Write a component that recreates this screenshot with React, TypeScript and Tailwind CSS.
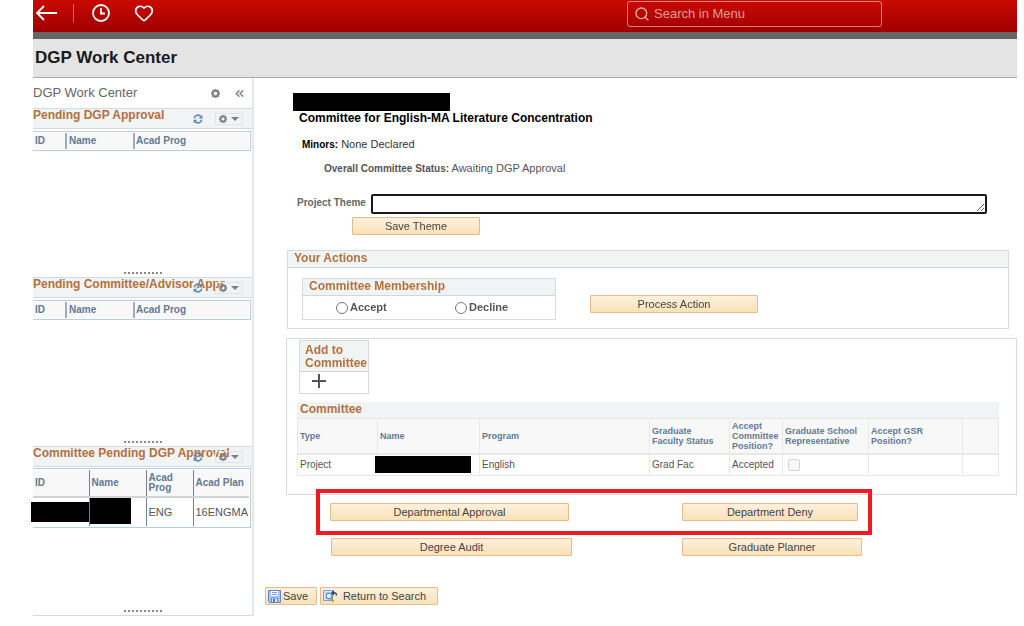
import type { ReactNode } from 'react'
import { ChevronsLeft, Heart, Search } from 'lucide-react'

// =============================================================
//  Data
// =============================================================

const committeeColumns = [
  { label: 'Type',                       width: 'w-[80px]' },
  { label: 'Name',                       width: 'w-[102px]' },
  { label: 'Program',                    width: '' },
  { label: 'Graduate Faculty Status',    width: 'w-[80px] pr-2' },
  { label: 'Accept Committee Position?', width: 'w-[53px]' },
  { label: 'Graduate School Representative', width: 'w-[86px]' },
  { label: 'Accept GSR Position?',       width: 'w-[94px] pr-6' },
  { label: '',                           width: 'w-[36px]' },
]

// =============================================================
//  Icons
// =============================================================

function GearIcon({ className }: { className: string }) {
  return (
    <svg viewBox="0 0 16 16" className={className} fill="none" stroke="#858585" aria-hidden="true">
      <circle cx="8" cy="8" r="5.2" strokeWidth="4.2" />
      <path d="M8 0v3M8 13v3M0 8h3M13 8h3M2.300 2.300l2 2M11.700 11.700l2 2M2.300 13.700l2-2M11.700 4.300l2-2" strokeWidth="3" />
    </svg>
  )
}

function ClockIcon() {
  return (
    <svg viewBox="0 0 20 20" className="size-[20px]" fill="none" stroke="currentColor" strokeWidth="1.8" aria-hidden="true">
      <circle cx="10" cy="10" r="8" />
      <path d="M10 5v5.500h4" />
    </svg>
  )
}

function RefreshIcon() {
  return (
    <svg viewBox="0 0 16 16" className="size-[10px]" fill="none" stroke="#6488ab" strokeWidth="2.6" aria-hidden="true">
      <path d="M2 7a6 6 0 0 1 10.6-3M14 9a6 6 0 0 1-10.6 3" />
      <path d="M15 1v6H9zM1 15V9h6z" fill="#6488ab" stroke="none" />
    </svg>
  )
}

function DiskIcon() {
  return (
    <svg viewBox="0 0 13 13" className="size-[13px]" aria-hidden="true">
      <path d="M.5.5h12v12h-11l-1-1z" fill="#a9c3f2" stroke="#5f86d0" />
      <path d="M3 1h7v5H3z" fill="#fff" />
      <path d="M4 2.500h5M4 4.500h5" stroke="#7d9edb" />
      <path d="M3.500 8h6v4.500h-6z" fill="#e6eefc" stroke="#5f86d0" />
      <path d="M5 9h2v3H5z" fill="#4a70c0" />
    </svg>
  )
}

function ReturnIcon() {
  return (
    <svg viewBox="0 0 15 14" className="h-[14px] w-[15px]" aria-hidden="true">
      <path d="M.5 1.500h9v10h-9z" fill="#dce8fb" stroke="#7e9fd6" />
      <path d="M2 4h3M2 9.500h3" stroke="#9cb6e2" />
      <circle cx="6" cy="7" r="2.800" fill="#eef6ff" stroke="#5c88cc" strokeWidth="1.200" />
      <path d="M8 9.500l2.500 3" stroke="#b5a324" strokeWidth="2" />
      <path d="M13.500 6.500c0-2-1-2.800-3-2.800" fill="none" stroke="#1d3f80" strokeWidth="1.300" />
      <path d="M8 3.700L11 1v5.400z" fill="#1d3f80" />
    </svg>
  )
}

// =============================================================
//  Shared pieces
// =============================================================

function Button({ className, children }: { className: string; children: ReactNode }) {
  return (
    <button
      type="button"
      className={`flex h-[18px] items-center justify-center rounded-[1px] border border-[#e5ba8c] bg-linear-to-b from-[#fdf0dc] to-[#fae2b8] text-[11px] whitespace-nowrap text-[#444] ${className}`}
    >
      {children}
    </button>
  )
}

function Pagelet({ title, children }: { title: string; children: ReactNode }) {
  return (
    <section className="flex h-[169px] flex-col">
      <div className="relative h-[21px] border-y border-[#d3dbe2] bg-[#f0f4f5]">
        <h2 className="text-[12px] leading-[13px] font-bold whitespace-nowrap text-[#b5703c]">{title}</h2>
        <div className="absolute top-1 right-[9px] flex items-center gap-3">
          <button type="button" aria-label="Refresh"><RefreshIcon /></button>
          <button
            type="button"
            aria-label="Settings"
            className="flex h-[12px] w-[28px] items-center justify-center gap-1 border border-[#dfe3e6]"
          >
            <GearIcon className="size-[8px]" />
            <span className="border-x-4 border-t-4 border-x-transparent border-t-[#808080]" />
          </button>
        </div>
      </div>
      {children}
      <div className="mt-auto flex justify-center gap-[2px] pb-[3px]">
        {Array.from({ length: 10 }, (_, i) => (
          <span key={i} className="size-[2px] bg-[#888]" />
        ))}
      </div>
    </section>
  )
}

function EmptyGrid() {
  return (
    <div className="mt-[2px] mr-px border-y border-r border-[#b9cde2] py-px pr-px">
      <table className="w-full bg-[#f8f8f8] text-left text-[10px] leading-[16px] text-[#5f7a96]">
        <thead>
          <tr>
            <th className="w-[33px] px-[2px]">ID</th>
            <th className="w-[68px] border-l-2 border-[#a3abb5] px-[2px]">Name</th>
            <th className="border-l-2 border-[#a3abb5] px-px">Acad Prog</th>
          </tr>
        </thead>
      </table>
    </div>
  )
}

function PendingGrid() {
  return (
    <div className="mt-px mr-px border-y border-r border-[#b9cde2] py-px pr-px">
      <table className="w-full table-fixed text-left text-[10px] leading-[10px]">
        <thead className="bg-[#f8f8f8] text-[#5f7a96]">
          <tr className="h-[27px] border-b-2 border-[#cfd3d8]">
            <th className="w-[56px] px-[2px]">ID</th>
            <th className="w-[57px] border-l border-[#77818d] px-[2px]">Name</th>
            <th className="w-[47px] border-l border-[#77818d] px-[2px]">Acad Prog</th>
            <th className="border-l border-[#77818d] px-[2px]">Acad Plan</th>
          </tr>
        </thead>
        <tbody className="text-[11px] text-[#555]">
          <tr className="h-[29px]">
            <td><div className="-ml-[2px] h-[20px] bg-black" /></td>
            <td className="border-l border-[#77818d] align-top"><div className="h-[26px] w-[41px] bg-black" /></td>
            <td className="border-l border-[#77818d] px-[2px]">ENG</td>
            <td className="border-l border-[#77818d] px-[2px]">16ENGMA</td>
          </tr>
        </tbody>
      </table>
    </div>
  )
}

// =============================================================
//  Sidebar
// =============================================================

function Sidebar() {
  return (
    <aside className="w-[221px] shrink-0 self-start border-r-2 border-[#e4e7ec]">
      <div className="flex h-[30px] items-center pr-[6px] text-[#666]">
        <span className="flex-1 text-[13px]">DGP Work Center</span>
        <button type="button" aria-label="Options" className="mr-[13px]"><GearIcon className="size-[9px]" /></button>
        <button type="button" aria-label="Collapse"><ChevronsLeft size={13} strokeWidth={3} className="text-[#888]" /></button>
      </div>
      <div className="border-b border-[#d3dbe2]">
        <Pagelet title="Pending DGP Approval"><EmptyGrid /></Pagelet>
        <Pagelet title="Pending Committee/Advisor Appr"><EmptyGrid /></Pagelet>
        <Pagelet title="Committee Pending DGP Approval"><PendingGrid /></Pagelet>
      </div>
    </aside>
  )
}

// =============================================================
//  Committee page
// =============================================================

function YourActions() {
  return (
    <section className="mt-[15px] mr-2 ml-[33px] border border-[#d5d9e0] pb-[8px]">
      <h2 className="h-[17px] border-b border-[#d0d6dd] bg-[#f0f4f5] px-[6px] text-[12px] leading-[15px] font-bold text-[#b5703c]">
        Your Actions
      </h2>
      <div className="mt-[10px] ml-[14px] flex items-start">
        <div role="radiogroup" aria-labelledby="membership" className="w-[254px] border border-[#d5d9e0]">
          <h3
            id="membership"
            className="h-[17px] border-b border-[#d0d6dd] bg-[#f0f4f5] px-[6px] text-[12px] leading-[15px] font-bold text-[#b5703c]"
          >
            Committee Membership
          </h3>
          <div className="flex h-[23px] items-center pl-[33px] text-[11px] font-bold text-[#555]">
            <label className="flex w-[119px] items-center gap-[2px]">
              <input type="radio" name="membership" className="size-[12px]" />
              Accept
            </label>
            <label className="flex items-center gap-[2px]">
              <input type="radio" name="membership" className="size-[12px]" />
              Decline
            </label>
          </div>
        </div>
        <Button className="mt-[17px] ml-[34px] w-[168px]">Process Action</Button>
      </div>
    </section>
  )
}

function CommitteePanel() {
  return (
    <section className="mt-[9px] ml-[32px] border border-[#d5d9e0] pt-px pr-[17px] pb-[18px] pl-[10px]">
      <div className="ml-[2px] w-[70px] border border-[#d5d9e0]">
        <h2 className="border-b border-[#d0d6dd] bg-[#f0f4f5] pt-[3px] pb-px pl-[5px] text-[12px] leading-[13px] font-bold text-[#b5703c]">
          Add to Committee
        </h2>
        <button type="button" aria-label="Add to Committee" className="mt-[2px] mb-[5px] ml-3 block">
          <svg viewBox="0 0 14 14" className="size-[14px]" stroke="#555" strokeWidth="2" aria-hidden="true">
            <path d="M7 0v14M0 7h14" />
          </svg>
        </button>
      </div>

      <table className="mt-2 w-full table-fixed text-left text-[10px] text-[#555]">
        <caption className="h-[16px] bg-[#f0f4f5] pl-[3px] text-left text-[12px] leading-[14px] font-bold text-[#b5703c]">
          Committee
        </caption>
        <thead className="bg-[#f8f8f8] leading-[10px] text-[#5f7a96]">
          <tr className="h-[35px]">
            {committeeColumns.map((col) => (
              <th key={col.label} className={`border border-b-2 border-[#e8e8e8] pl-[2px] text-[9px] ${col.width}`}>
                {col.label}
              </th>
            ))}
          </tr>
        </thead>
        <tbody>
          <tr className="h-[22px] [&>td]:border [&>td]:border-[#e8e8e8] [&>td]:px-[2px]">
            <td>Project</td>
            <td><div className="relative -ml-[5px] h-[17px] w-[96px] bg-black" /></td>
            <td>English</td>
            <td>Grad Fac</td>
            <td>Accepted</td>
            <td>
              <input
                type="checkbox"
                disabled
                aria-label="Graduate School Representative"
                className="ml-[3px] block size-[12px]"
              />
            </td>
            <td />
            <td />
          </tr>
        </tbody>
      </table>
    </section>
  )
}

function CommitteePage() {
  return (
    <main className="min-w-0 flex-1 pt-[15px]">
      <div className="ml-[39px] h-[18px] w-[157px] bg-black" />
      <h1 className="ml-[45px] text-[12px] leading-[15px] font-bold text-black">
        Committee for English-MA Literature Concentration
      </h1>
      <p className="mt-[11px] ml-[48px] text-[11px] leading-[14px] text-[#333]">
        <b className="text-[10px] text-black">Minors:</b> None Declared
      </p>
      <p className="mt-[9px] ml-[70px] text-[11px] leading-[14px] text-[#555]">
        <b className="text-[10px]">Overall Committee Status:</b> Awaiting DGP Approval
      </p>

      <div className="mt-[18px] mr-[30px] ml-[43px] flex items-start">
        <label htmlFor="theme" className="w-[74px] text-[10px] leading-[18px] font-bold whitespace-nowrap text-[#666]">
          Project Theme
        </label>
        <textarea
          id="theme"
          rows={1}
          autoFocus
          className="block h-[20px] min-w-0 flex-1 rounded-[2px] border-2 border-[#1a1a1a] px-[2px] text-[11px] leading-[14px] outline-none"
        />
      </div>
      <Button className="mt-[3px] ml-[98px] w-[128px]">Save Theme</Button>

      <YourActions />
      <CommitteePanel />

      <div className="relative -mt-[6px] ml-[62px] flex w-[556px] justify-between border-4 border-[#ed1c24] p-[10px]">
        <Button className="w-[239px]">Departmental Approval</Button>
        <Button className="w-[176px]">Department Deny</Button>
      </div>
      <div className="mt-[3px] ml-[77px] flex w-[531px] justify-between">
        <Button className="w-[241px]">Degree Audit</Button>
        <Button className="w-[180px]">Graduate Planner</Button>
      </div>

      <div className="mt-[31px] ml-[11px] flex gap-[3px]">
        <Button className="w-[52px] gap-[2px] pr-[6px]"><DiskIcon />Save</Button>
        <Button className="w-[118px] gap-[5px] pr-[9px]"><ReturnIcon />Return to Search</Button>
      </div>
    </main>
  )
}

// =============================================================
//  App
// =============================================================

export default function App() {
  return (
    <div className="min-h-screen bg-white pr-[7px] pl-[33px] font-['Liberation_Sans',Arial,sans-serif]">
      <header className="flex h-[39px] items-start border-b-[7px] border-[#666] bg-linear-to-b from-[#c90a00] to-[#a00000] text-white">
        <nav className="flex flex-1 items-center pt-px pl-px">
          <button type="button" aria-label="Back">
            <svg viewBox="0 0 24 24" className="size-[24px]" fill="none" stroke="currentColor" strokeWidth="1.800" aria-hidden="true">
              <path d="M10 5l-7 7 7 7M3 12h20" />
            </svg>
          </button>
          <span className="mr-[17px] ml-[15px] h-[18px] w-px bg-white/40" />
          <button type="button" aria-label="Recent"><ClockIcon /></button>
          <button type="button" aria-label="Favorites" className="ml-[23px]"><Heart size={20} strokeWidth={2} /></button>
        </nav>
        <div className="mt-px mr-[135px] flex h-[26px] w-[255px] items-center rounded-[3px] border border-white/50 pl-[6px]">
          <Search size={16} strokeWidth={2} className="text-white/70" />
          <input
            type="text"
            aria-label="Search in Menu"
            placeholder="Search in Menu"
            className="ml-1 min-w-0 flex-1 bg-transparent text-[13px] outline-none placeholder:text-white/60"
          />
        </div>
      </header>

      <div className="flex h-[39px] items-center border-b border-[#aaa] bg-[#e4e4e4] pl-[2px] text-[17px] font-bold text-[#1a1a1a]">
        DGP Work Center
      </div>

      <div className="flex">
        <Sidebar />
        <CommitteePage />
      </div>
    </div>
  )
}
